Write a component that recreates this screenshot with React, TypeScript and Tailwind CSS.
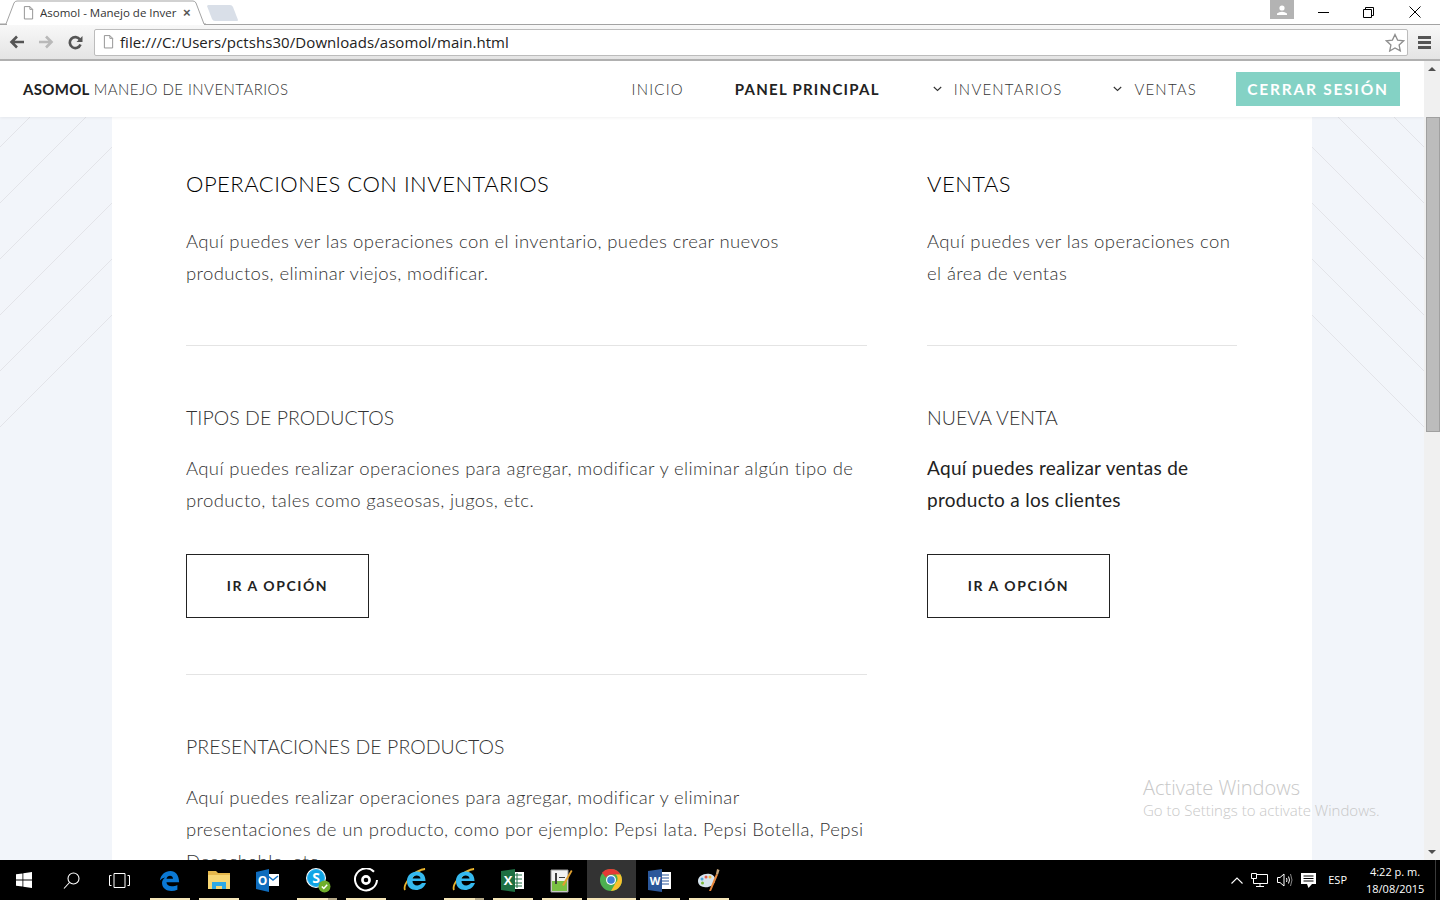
import type { ReactNode } from 'react';

const LINE_ENDS = [147, 203, 259, 315, 371, 427];

function StripedBackdrop() {
  return (
    <svg className="absolute inset-0" width="1424" height="799">
      {LINE_ENDS.map((y) => (
        <g key={y} stroke="#e3e4e9" strokeWidth="1">
          <line x1="0" y1={y - 61} x2="112" y2={y - 173} />
          <line x1="1424" y1={y - 61} x2="1312" y2={y - 173} />
        </g>
      ))}
    </svg>
  );
}

function DocIcon({ className }: { className: string }) {
  return (
    <svg className={className} viewBox="0 0 12 15" fill="#fff" stroke="#8c8c8c" strokeWidth="1">
      <path d="M1.5.5h6l3 3v10.5h-9z" />
      <path d="M7.5.5v3h3" fill="none" />
    </svg>
  );
}

function TabStrip() {
  return (
    <div className="relative h-[25px] bg-white border-b border-[#a3a3a3] flex items-start shrink-0">
      <div className="relative w-[206px] h-[25px] shrink-0">
        <svg className="absolute left-0 top-0" width="206" height="25">
          <path d="M0 24h6L14 3q1-2 3-2h176q2 0 3 2l8 21h2" fill="#fff" stroke="#a3a3a3" />
          <path d="M7 25h197v-1H7z" fill="#fff" />
        </svg>
        <div className="absolute left-[23px] top-[5px] flex items-center">
          <DocIcon className="w-[11px] h-[14px]" />
          <span className="ml-[6px] w-[138px] overflow-hidden whitespace-nowrap text-[11.5px] leading-[16px] text-[#333] font-['Open_Sans',sans-serif]">
            Asomol - Manejo de Inver
          </span>
          <span className="ml-[5px] text-[13px] leading-[16px] font-bold text-[#555] font-['Liberation_Sans',sans-serif]">×</span>
        </div>
      </div>
      <svg className="mt-[5px] ml-[1px]" width="32" height="16">
        <path d="M1 0h22q2 0 3 2l5 13q0 1-1 1H8q-2 0-3-2L0 1z" fill="#d9dfe8" />
      </svg>
      <div className="ml-auto flex items-start">
        <div className="w-[24px] h-[19px] bg-[#b3b3b3] flex items-center justify-center">
          <svg width="10" height="10" viewBox="0 0 10 10" fill="#fff">
            <circle cx="5" cy="3" r="2.6" />
            <path d="M0 10V8.500q2-1.800 5-1.800t5 1.800V10z" />
          </svg>
        </div>
        <div className="w-[146px] h-[24px] flex items-center pl-[24px]">
          <div className="w-[11px] h-px bg-black" />
          <svg className="ml-[34px]" width="11" height="11" fill="none" stroke="#000">
            <path d="M.5 2.500h8v8h-8zM2.500 2.500v-2h8v8h-2" />
          </svg>
          <svg className="ml-[35px]" width="12" height="12" stroke="#000" fill="none">
            <path d="M.5.5l11 11M11.500.5l-11 11" />
          </svg>
        </div>
      </div>
    </div>
  );
}

function Toolbar() {
  return (
    <div className="h-[36px] shrink-0 flex items-center bg-gradient-to-b from-[#f8f8f8] to-[#e4e4e4] border-b-2 border-[#b0b0b0]">
      <svg className="ml-[9px]" width="16" height="14" viewBox="0 0 16 14" fill="none" stroke="#555" strokeWidth="2.600">
        <path d="M15 7H3M8 1.500L2.500 7 8 12.500" />
      </svg>
      <svg className="ml-[13px]" width="16" height="14" viewBox="0 0 16 14" fill="none" stroke="#b9b9b9" strokeWidth="2.600">
        <path d="M1 7h12M8 1.500L13.500 7 8 12.500" />
      </svg>
      <svg className="ml-[14px]" width="15" height="15" viewBox="0 0 15 15" fill="none" stroke="#555" strokeWidth="2.600">
        <path d="M12.500 9.500a5.500 5.500 0 1 1-.6-5" />
        <path d="M14.500 1v6h-6z" fill="#555" stroke="none" />
      </svg>
      <div className="ml-[11px] w-[1314px] h-[27px] bg-white border border-[#bcbcbc] rounded-[2px] flex items-center pl-[8px] pr-[2px]">
        <DocIcon className="w-[11px] h-[14px]" />
        <span className="ml-[6px] text-[15px] text-[#222] font-['Open_Sans',sans-serif] tracking-[0.07px]">
          file:///C:/Users/pctshs30/Downloads/asomol/main.html
        </span>
        <svg className="ml-auto" width="20" height="19" viewBox="0 0 20 19" fill="#fff" stroke="#8e8e8e" strokeWidth="1.300">
          <path d="M10 1.500l2.600 5.600 6 .7-4.500 4.100 1.200 6L10 15l-5.300 3 1.200-6L1.400 7.800l6-.7z" />
        </svg>
      </div>
      <div className="ml-[10px] flex flex-col gap-[2px]">
        <div className="w-[13px] h-[3px] bg-[#555]" />
        <div className="w-[13px] h-[3px] bg-[#555]" />
        <div className="w-[13px] h-[3px] bg-[#555]" />
      </div>
    </div>
  );
}

function Chevron() {
  return (
    <svg width="9" height="6" viewBox="0 0 9 6" fill="none" stroke="#333" strokeWidth="1.100">
      <path d="M.8 1l3.700 3.500L8.200 1" />
    </svg>
  );
}

function NavBar() {
  const link = "text-[15px] font-light tracking-[1.2px] text-[#333]";
  return (
    <nav className="relative z-10 h-[56px] bg-white shadow-[0_1px_3px_rgba(0,0,0,0.06)] flex items-center pl-[23px] pr-[24px] font-['Lato',sans-serif] shrink-0">
      <span className="text-[15px] font-bold text-[#222] tracking-[0.3px]">ASOMOL</span>
      <span className="ml-[4px] text-[15px] font-light text-[#333] tracking-[0.45px]">MANEJO DE INVENTARIOS</span>
      <div className="ml-auto flex items-center">
        <a className={link}>INICIO</a>
        <a className="ml-[51px] text-[15px] font-bold tracking-[1.25px] text-[#222]">PANEL PRINCIPAL</a>
        <span className="ml-[53px] mr-[12px] flex"><Chevron /></span>
        <a className={link}>INVENTARIOS</a>
        <span className="ml-[51px] mr-[12px] flex"><Chevron /></span>
        <a className={link}>VENTAS</a>
        <a className="ml-[39px] w-[164px] h-[34px] pt-[1px] bg-[#84d2c5] flex items-center justify-center text-white text-[15.500px] font-bold tracking-[1.75px]">
          CERRAR SESIÓN
        </a>
      </div>
    </nav>
  );
}

function OptionButton() {
  return (
    <a className="mt-[38px] w-[183px] h-[64px] pb-[1px] shrink-0 border border-[#222] flex items-center justify-center text-[14px] font-bold tracking-[1.55px] text-[#222]">
      IR A OPCIÓN
    </a>
  );
}

function Heading({ children }: { children: ReactNode }) {
  return <h3 className="h-[28px] shrink-0 text-[19.500px] leading-[28px] font-light tracking-[0.05px] text-[#333] whitespace-nowrap">{children}</h3>;
}

function Copy({ children, strong }: { children: ReactNode; strong?: boolean }) {
  return (
    <p className={strong ? "mt-[20px] text-[19px] leading-[32px] tracking-[0.3px] text-[#222]" : "mt-[20px] text-[18.500px] leading-[32px] font-light tracking-[0.38px] text-[#333]"}>
      {children}
    </p>
  );
}

function MainContent() {
  return (
    <main className="relative mx-[112px] flex-1 min-h-0 bg-white pl-[74px] pt-[53px] flex items-start font-['Lato',sans-serif] overflow-hidden">
      <div className="w-[681px] shrink-0 flex flex-col">
        <h2 className="h-[28px] shrink-0 text-[22px] leading-[28px] font-light text-[#000] tracking-[0.49px] whitespace-nowrap">OPERACIONES CON INVENTARIOS</h2>
        <p className="mt-[27px] text-[18.500px] leading-[32px] font-light tracking-[0.38px] text-[#333]">
          Aquí puedes ver las operaciones con el inventario, puedes crear nuevos productos, eliminar viejos, modificar.
        </p>
        <hr className="mt-[56px] mb-[58px] border-[#e4e4e4]" />
        <Heading>TIPOS DE PRODUCTOS</Heading>
        <Copy>Aquí puedes realizar operaciones para agregar, modificar y eliminar algún tipo de producto, tales como gaseosas, jugos, etc.</Copy>
        <OptionButton />
        <hr className="mt-[56px] mb-[58px] border-[#e4e4e4]" />
        <Heading>PRESENTACIONES DE PRODUCTOS</Heading>
        <Copy>Aquí puedes realizar operaciones para agregar, modificar y eliminar presentaciones de un producto, como por ejemplo: Pepsi lata. Pepsi Botella, Pepsi Desechable, etc.</Copy>
      </div>
      <div className="ml-[60px] w-[310px] shrink-0 flex flex-col">
        <h2 className="h-[28px] shrink-0 text-[22px] leading-[28px] font-light text-[#000] tracking-[0.49px]">VENTAS</h2>
        <p className="mt-[27px] text-[18.500px] leading-[32px] font-light tracking-[0.38px] text-[#333]">
          Aquí puedes ver las operaciones con el área de ventas
        </p>
        <hr className="mt-[56px] mb-[58px] border-[#e4e4e4]" />
        <Heading>NUEVA VENTA</Heading>
        <Copy strong>Aquí puedes realizar ventas de producto a los clientes</Copy>
        <OptionButton />
      </div>
    </main>
  );
}

function Scrollbar() {
  return (
    <div className="w-[16px] shrink-0 bg-[#f0f0f0] flex flex-col items-center">
      <div className="mt-[6px] w-0 h-0 border-x-[4px] border-x-transparent border-b-[4px] border-b-[#505050]" />
      <div className="mt-[46px] ml-[1px] w-[14px] h-[315px] bg-[#bcbcbc] border border-[#a0a0a0]" />
      <div className="mt-auto mb-[6px] w-0 h-0 border-x-[4px] border-x-transparent border-t-[4px] border-t-[#505050]" />
    </div>
  );
}

function EdgeIcon() {
  return (
    <svg className="mr-[2px]" width="21" height="21" viewBox="0 0 24 24">
      <path d="M1 12C2 5 7 1 13 1c6 0 10 5 10 13H8.500c.3 5 7 6 12.500 3v5.500c-7 3-17 1.500-17.500-7-.2-3 1-5 3.500-7C4.500 9 2.500 10 1 12zm7.500-2h7.500c0-4.500-6.500-4.500-7.500 0z" fill="#0a78d4" />
    </svg>
  );
}

function FolderIcon() {
  return (
    <svg className="mr-[2px]" width="22" height="20" viewBox="0 0 22 20">
      <path d="M0 1h8l2 2h12v3H0z" fill="#e6b84c" />
      <path d="M0 5h22v14H0z" fill="#f8d775" />
      <path d="M4 19v-7h14v7h-4v-3H8v3z" fill="#2fa9e6" />
    </svg>
  );
}

function OutlookIcon() {
  return (
    <svg className="mr-[2px]" width="23" height="23" viewBox="0 0 23 23">
      <path d="M9 5h14v12H9z" fill="#fff" />
      <path d="M12 7l5 4 5-4" fill="none" stroke="#1273c4" strokeWidth="1.500" />
      <path d="M0 3l13-3v23L0 20z" fill="#0f6cbd" />
      <text x="6.500" y="16" fontSize="12" fontWeight="700" fill="#fff" textAnchor="middle" fontFamily="Open Sans">O</text>
    </svg>
  );
}

function SkypeIcon() {
  return (
    <svg width="26" height="26" viewBox="0 0 26 26">
      <circle cx="11" cy="11" r="10" fill="#fff" />
      <circle cx="11" cy="11" r="8.500" fill="#0ea5e6" stroke="#35b5ef" />
      <text x="11" y="16" fontSize="14" fontWeight="700" fill="#fff" textAnchor="middle" fontFamily="Open Sans">S</text>
      <circle cx="19.500" cy="19.500" r="6" fill="#6fae2c" />
      <path d="M16.800 19.500l2 2 3.400-3.700" fill="none" stroke="#fff" strokeWidth="1.500" />
    </svg>
  );
}

function GrooveIcon() {
  return (
    <svg className="mr-[2px]" width="24" height="24" viewBox="0 0 24 24" fill="none" stroke="#fff">
      <path d="M20 3.800A11 11 0 1 0 23 12" strokeWidth="2" />
      <circle cx="12" cy="12" r="3.600" strokeWidth="2.600" />
    </svg>
  );
}

function IeIcon() {
  return (
    <svg className="mr-[2px]" width="24" height="24" viewBox="0 0 24 24">
      <path d="M2 22C0 18 8 3 22 1c-4 0-11 4-16 13" fill="none" stroke="#e8b32d" strokeWidth="1.800" />
      <path d="M4 13C4 7 9 3.500 14 3.500S22.500 7 22.500 13h-13c0 5 6.500 6 9.500 2h4c-2 5-6 7-10 7-5 0-9-3-9-9zm5.500-2.500h8c0-4-7.500-4-8 0z" fill="#35b9ee" />
    </svg>
  );
}

function ExcelIcon() {
  return (
    <svg className="mr-[2px]" width="23" height="23" viewBox="0 0 23 23">
      <path d="M10 3h13v17H10z" fill="#fff" />
      <path d="M12 6h9M12 10h9M12 14h9M12 17h9M16 4v15" stroke="#1d6f42" strokeWidth="1" />
      <path d="M0 2l14-2v23L0 21z" fill="#1d6f42" />
      <text x="7" y="16" fontSize="13" fontWeight="700" fill="#fff" textAnchor="middle" fontFamily="Open Sans">X</text>
    </svg>
  );
}

function NotepadIcon() {
  return (
    <svg className="mr-[2px]" width="23" height="25" viewBox="0 0 23 25">
      <path d="M1 2h17v22H1z" fill="#f2f2f2" stroke="#9a9a9a" />
      <path d="M2 13h15v10H2z" fill="#7ac143" />
      <path d="M5 5h2v11H5zM9 9h6v1H9z" fill="#3d3d3d" />
      <path d="M12 17L21 2l1.500 1L14 18z" fill="#e0a030" />
    </svg>
  );
}

function ChromeIcon() {
  return (
    <svg className="mr-[2px]" width="22" height="22" viewBox="0 0 22 22">
      <circle cx="11" cy="11" r="11" fill="#4caf50" />
      <path d="M11 0a11 11 0 0 1 9.500 5.500H11a5.500 5.500 0 0 0-5 3L2 3.700A11 11 0 0 1 11 0z" fill="#e53935" />
      <path d="M20.500 5.500A11 11 0 0 1 11 22l4.700-8.200a5.500 5.500 0 0 0 0-8.300z" fill="#fbc02d" />
      <circle cx="11" cy="11" r="5" fill="#fff" />
      <circle cx="11" cy="11" r="3.800" fill="#3f7fd6" />
    </svg>
  );
}

function WordIcon() {
  return (
    <svg className="mr-[2px]" width="23" height="23" viewBox="0 0 23 23">
      <path d="M10 3h13v17H10z" fill="#fff" />
      <path d="M14 6h7M14 9h7M14 12h7M14 15h7" stroke="#2b579a" strokeWidth="1" />
      <path d="M0 2l14-2v23L0 21z" fill="#2b579a" />
      <text x="7" y="16" fontSize="11" fontWeight="700" fill="#fff" textAnchor="middle" fontFamily="Open Sans">W</text>
    </svg>
  );
}

function PaintIcon() {
  return (
    <svg className="mr-[2px]" width="24" height="24" viewBox="0 0 24 24">
      <path d="M1 13C1 8 7 5 13 6c3 .5 6 3 5 7-1 5-7 7-11 6-4-.5-6-3-6-6z" fill="#d6e4ee" />
      <circle cx="5" cy="11" r="1.500" fill="#4ba3d8" />
      <circle cx="9" cy="9" r="1.500" fill="#e25b4a" />
      <circle cx="13" cy="9" r="1.500" fill="#f0b840" />
      <circle cx="5.500" cy="15" r="1.500" fill="#7bb93a" />
      <path d="M12 23L19 6l2 .8L14 23z" fill="#e8873a" />
      <path d="M19 6l1-5 2.500 1-1.500 4.800z" fill="#c9a679" />
    </svg>
  );
}

const APPS = [
  { icon: <EdgeIcon />, bar: true },
  { icon: <FolderIcon />, bar: true },
  { icon: <OutlookIcon />, bar: false },
  { icon: <SkypeIcon />, bar: true, stacked: true },
  { icon: <GrooveIcon />, bar: true },
  { icon: <IeIcon />, bar: false },
  { icon: <IeIcon />, bar: true, stacked: true },
  { icon: <ExcelIcon />, bar: true },
  { icon: <NotepadIcon />, bar: true },
  { icon: <ChromeIcon />, bar: true, active: true },
  { icon: <WordIcon />, bar: true },
  { icon: <PaintIcon />, bar: true },
];

function Taskbar() {
  return (
    <div className="h-[40px] shrink-0 bg-black flex items-center text-white font-['Open_Sans',sans-serif]">
      <div className="w-[48px] flex justify-center">
        <svg width="16" height="16" viewBox="0 0 16 16" fill="#fff">
          <path d="M0 2.300l6.500-.9v6.200H0zM7.300 1.300L16 0v7.600H7.300zM0 8.400h6.500v6.200L0 13.700zM7.300 8.400H16V16l-8.700-1.300z" />
        </svg>
      </div>
      <div className="w-[48px] flex justify-center">
        <svg className="mr-[2px]" width="17" height="17" viewBox="0 0 17 17" fill="none" stroke="#fff" strokeWidth="1.100">
          <circle cx="10.500" cy="6.500" r="5.500" />
          <path d="M6.500 10.500L1 16.500" />
        </svg>
      </div>
      <div className="w-[50px] flex justify-center">
        <svg className="mr-[3px]" width="21" height="15" viewBox="0 0 21 15" fill="none" stroke="#fff" strokeWidth="1">
          <path d="M5 .5h11v14H5zM2.500 2.500H.5v10h2M18.500 2.500h2v10h-2" />
        </svg>
      </div>
      {APPS.map((app, i) => (
        <div
          key={i}
          className={app.active ? "relative w-[49px] h-[40px] flex items-center justify-center bg-[#333]" : "relative w-[49px] h-[40px] flex items-center justify-center"}
        >
          {app.icon}
          {app.bar && (
            <div className={app.active ? "absolute bottom-0 inset-x-0 h-[2px] bg-[#f5e6b8]" : "absolute bottom-0 left-[4px] right-[5px] h-[2px] bg-[#f5e6b8]"}>
              {app.stacked && <div className="ml-auto w-[9px] h-full bg-[#b5a988]" />}
            </div>
          )}
        </div>
      ))}
      <div className="ml-auto flex items-center">
        <svg width="12" height="7" viewBox="0 0 12 7" fill="none" stroke="#fff" strokeWidth="1.100">
          <path d="M.5 6.500L6 1l5.500 5.500" />
        </svg>
        <svg className="ml-[8px]" width="17" height="14" viewBox="0 0 17 14" fill="none" stroke="#fff">
          <path d="M2.500 1.500h14v9h-14zM9 10.500v3M5 13.500h8" />
          <path d="M.5.500h5v5h-5z" fill="#000" />
        </svg>
        <svg className="ml-[9px]" width="16" height="14" viewBox="0 0 16 14" fill="none" stroke="#fff">
          <path d="M.5 4.500h2.500L7 1v12L3 9.500H.5zM9.500 5q1 2 0 4M11.500 3.500q2 3.500 0 7" />
          <path d="M13.500 1q3 6 0 12" stroke="#888" />
        </svg>
        <svg className="ml-[8px]" width="15" height="15" viewBox="0 0 15 15" fill="#fff">
          <path d="M0 0h15v11h-4l-3.500 4L6 11H0z" />
          <path d="M2.500 3h10M2.500 5.500h10M2.500 8h10" stroke="#000" />
        </svg>
        <span className="ml-[12px] text-[11px]">ESP</span>
        <div className="ml-[19px] w-[58px] text-center text-[11px] leading-[17px]">
          <div>4:22 p. m.</div>
          <div className="whitespace-nowrap">18/08/2015</div>
        </div>
        <div className="w-[15px] h-[40px] ml-[1px] flex justify-end">
          <div className="w-px h-full bg-[#3a3a3a] mr-[4px]" />
        </div>
      </div>
    </div>
  );
}

export default function App() {
  return (
    <div className="w-[1440px] h-[900px] overflow-hidden flex flex-col bg-white relative">
      <TabStrip />
      <Toolbar />
      <div className="flex flex-1 min-h-0">
        <div className="relative w-[1424px] bg-[#f2f5fa] flex flex-col overflow-hidden">
          <StripedBackdrop />
          <NavBar />
          <MainContent />
        </div>
        <Scrollbar />
      </div>
      <Taskbar />
      {/* watermark sits over the page */}
      <div className="absolute left-[1143px] top-[775px] font-['Open_Sans',sans-serif] text-[#c8c8c8] pointer-events-none">
        <div className="text-[20px] leading-[25px] font-light">Activate Windows</div>
        <div className="text-[15px] leading-[20px] font-light">Go to Settings to activate Windows.</div>
      </div>
    </div>
  );
}
